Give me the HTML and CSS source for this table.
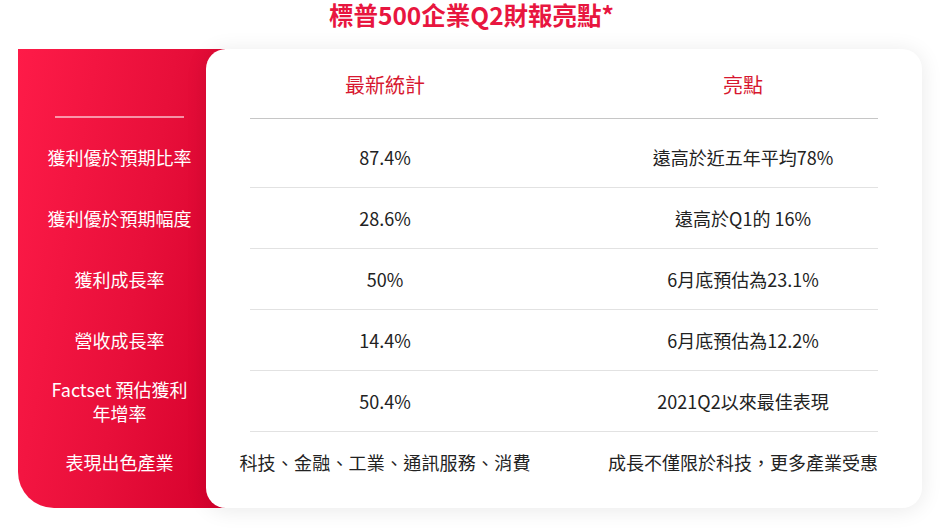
FILE: index.html
```html
<!DOCTYPE html>
<html lang="zh-Hant">
<head>
<meta charset="utf-8">
<title>標普500企業Q2財報亮點</title>
<link rel="stylesheet" href="styles.css">
</head>
<body>
<h1 class="title">標普500企業Q2財報亮點*</h1>
<div class="board">
  <div class="side">
    <div class="side-head"><span class="side-rule"></span></div>
    <div class="row first"><span class="label">獲利優於預期比率</span></div>
    <div class="row"><span class="label">獲利優於預期幅度</span></div>
    <div class="row"><span class="label">獲利成長率</span></div>
    <div class="row"><span class="label">營收成長率</span></div>
    <div class="row"><span class="label two">Factset 預估獲利<br>年增率</span></div>
    <div class="row last"><span class="label">表現出色產業</span></div>
  </div>
  <div class="card">
    <div class="head">
      <span class="cell">最新統計</span>
      <span class="cell">亮點</span>
    </div>
    <div class="row first line"><span class="cell">87.4%</span><span class="cell">遠高於近五年平均78%</span></div>
    <div class="row line"><span class="cell">28.6%</span><span class="cell">遠高於Q1的 16%</span></div>
    <div class="row line"><span class="cell">50%</span><span class="cell">6月底預估為23.1%</span></div>
    <div class="row line"><span class="cell">14.4%</span><span class="cell">6月底預估為12.2%</span></div>
    <div class="row line"><span class="cell">50.4%</span><span class="cell">2021Q2以來最佳表現</span></div>
    <div class="row last"><span class="cell"><span class="wide">科技、金融、工業、通訊服務、消費</span></span><span class="cell">成長不僅限於科技，更多產業受惠</span></div>
  </div>
</div>
</body>
</html>
```
FILE: styles.css
```css
html, body {
  margin: 0;
  padding: 0;
  background: #ffffff;
}
body {
  width: 943px;
  height: 528px;
  overflow: hidden;
  font-family: "Noto Sans CJK TC", "Noto Sans", sans-serif;
  color: #222222;
}
.title {
  margin: 0 0 19px 0;
  height: 30px;
  line-height: 30px;
  text-align: center;
  font-size: 24.5px;
  font-weight: 700;
  color: #e8163f;
  letter-spacing: 0;
}
.board {
  display: flex;
  margin-left: 18px;
  width: 904px;
  height: 459px;
}
.side {
  width: 203px;
  padding-right: 4px;
  flex: none;
  background: linear-gradient(100deg, #fe1b48 0%, #e80f3a 55%, #d5002c 100%);
  border-bottom-left-radius: 36px;
  color: #ffffff;
}
.side-head {
  height: 69px;
  display: flex;
  align-items: flex-end;
  justify-content: center;
}
.side-rule {
  display: block;
  width: 129px;
  height: 2px;
  background: rgba(255, 255, 255, 0.55);
}
.row {
  height: 60px;
  border-bottom: 1px solid transparent;
  display: flex;
  align-items: center;
  justify-content: center;
}
.row.first {
  height: 60px;
  padding-top: 8px;
}
.side .row.first {
  padding-top: 9px;
}
.label {
  font-size: 18px;
  line-height: 24px;
  text-align: center;
  white-space: nowrap;
}
.card {
  flex: 1;
  margin-left: -19px;
  position: relative;
  background: #ffffff;
  border-radius: 20px;
  box-shadow: 0 2px 22px rgba(0, 0, 0, 0.09);
  padding: 0 44px;
}
.head {
  height: 68px;
  border-bottom: 1px solid #c6c6c6;
  display: flex;
  align-items: center;
  justify-content: center;
  gap: 88px;
  padding-top: 1px;
}
.head .cell {
  color: #d7172f;
  font-size: 20px;
}
.card .row {
  gap: 88px;
}
.card .row.line {
  border-bottom: 1px solid #e2e2e2;
}
.cell {
  width: 270px;
  flex: none;
  display: flex;
  justify-content: center;
  font-size: 18px;
  white-space: nowrap;
}
.wide {
  flex: none;
  letter-spacing: 0.2px;
}
```
